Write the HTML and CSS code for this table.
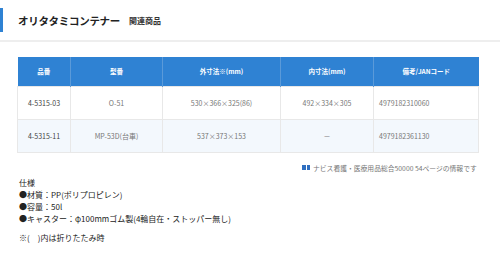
FILE: index.html
```html
<!DOCTYPE html>
<html lang="ja">
<head>
<meta charset="utf-8">
<link rel="stylesheet" href="styles.css">
</head>
<body>
<div class="title-bar">
  <h1 class="title">オリタタミコンテナー</h1>
  <span class="subtitle">関連商品</span>
</div>
<div class="divider"></div>
<div class="table-wrap">
  <table class="spec-table">
    <colgroup>
      <col class="c1"><col class="c2"><col class="c3"><col class="c4"><col class="c5">
    </colgroup>
    <thead>
      <tr><th>品番</th><th>型番</th><th>外寸法※(mm)</th><th>内寸法(mm)</th><th>備考/JANコード</th></tr>
    </thead>
    <tbody>
      <tr><td>4-5315-03</td><td>O-51</td><td>530×366×325(86)</td><td>492×334×305</td><td class="left">4979182310060</td></tr>
      <tr class="alt"><td>4-5315-11</td><td>MP-53D(台車)</td><td>537×373×153</td><td>－</td><td class="left">4979182361130</td></tr>
    </tbody>
  </table>
</div>
<p class="note"><span class="note-icon"></span><span class="note-icon"></span>ナビス看護・医療用品総合50000 54ページの情報です</p>
<div class="specs">
  <p>仕様</p>
  <p>●材質：PP(ポリプロピレン)</p>
  <p>●容量：50l</p>
  <p>●キャスター：φ100mmゴム製(4輪自在・ストッパー無し)</p>
  <p class="gap">※(　)内は折りたたみ時</p>
</div>
</body>
</html>
```

FILE: styles.css
```css
* { box-sizing: border-box; }
body {
  margin: 0;
  background: #fff;
  font-family: "Noto Sans CJK JP", "Noto Sans", sans-serif;
  color: #222;
}
.title-bar {
  margin-top: 8px;
  height: 24px;
  border-left: 3px solid #2f82d3;
  display: flex;
  align-items: center;
  padding-left: 15px;
  gap: 9px;
}
.title {
  margin: 0;
  font-size: 10.5px;
  font-weight: 700;
  color: #222;
  letter-spacing: -0.3px;
}
.subtitle {
  font-size: 8px;
  font-weight: 700;
  color: #333;
  margin-top: 1px;
}
.divider {
  margin-top: 8px;
  height: 2px;
  background: #eeeeee;
}
.table-wrap {
  padding: 15px 22px 0 17px;
}
.spec-table {
  width: 461px;
  border-collapse: collapse;
  table-layout: fixed;
  font-size: 7px;
}
.c1 { width: 53px; }
.c2 { width: 92px; }
.c3 { width: 118px; }
.c4 { width: 93px; }
.c5 { width: 105px; }
.spec-table th {
  background: #2f82d3;
  color: #fff;
  font-weight: 700;
  font-size: 6.5px;
  height: 29px;
  text-align: center;
  border-right: 1px solid #5a9ad9;
  padding: 0;
}
.spec-table th:last-child { border-right: none; }
.spec-table td {
  height: 33px;
  text-align: center;
  color: #777;
  border: 1px solid #e8e8e8;
  padding: 0;
}
.spec-table td.left {
  text-align: left;
  padding-left: 5px;
}
.spec-table tr.alt td { background: #f3f8fd; }
.spec-table td:first-child { color: #444; }
.note {
  margin: 10px 0 0 302px;
  font-size: 6.8px;
  line-height: 10px;
  color: #777;
  display: flex;
  align-items: center;
  white-space: nowrap;
}
.note-icon {
  display: inline-block;
  width: 3.5px;
  height: 5px;
  background: #2f6fc0;
  margin-right: 1px;
}
.note-icon + .note-icon { margin-right: 3px; }
.specs {
  margin: 4px 0 0 19px;
  font-size: 8px;
  line-height: 12px;
  color: #222;
}
.specs p { margin: 0; }
.specs p.gap { margin-top: 7px; }
```
